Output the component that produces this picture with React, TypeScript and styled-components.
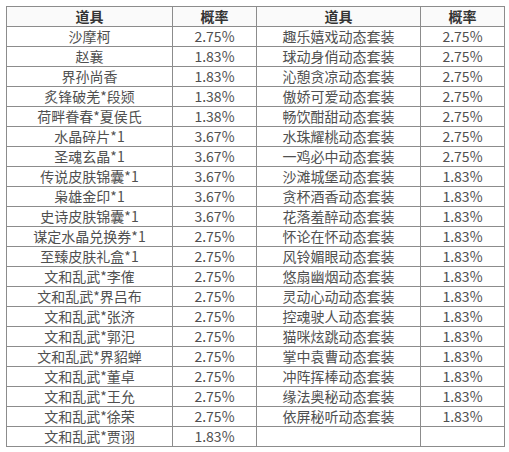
import styled, { createGlobalStyle } from "styled-components";

const GlobalStyle = createGlobalStyle`
    body {
        margin: 0;
        background: #ffffff;
        font-family: "Noto Sans CJK SC", "Noto Sans", sans-serif;
    }
`;

const Page = styled.div`
    padding: 6px 0 0 6px;
`;

const Table = styled.table`
    border-collapse: collapse;
    table-layout: fixed;
    width: 498px;
    font-size: 14px;
`;

const HeadCell = styled.th`
    height: 19px;
    padding: 0;
    border: 1px solid #8c8c8c;
    background: #fafafa;
    color: #333333;
    font-weight: bold;
    line-height: 19px;
    text-align: center;
`;

const Cell = styled.td`
    height: 19px;
    padding: 0;
    border: 1px solid #8c8c8c;
    color: #505050;
    line-height: 19px;
    text-align: center;
    white-space: nowrap;
`;

const left: [string, string][] = [
    ["沙摩柯", "2.75%"],
    ["赵襄", "1.83%"],
    ["界孙尚香", "1.83%"],
    ["炙锋破羌*段颎", "1.38%"],
    ["荷畔眷春*夏侯氏", "1.38%"],
    ["水晶碎片*1", "3.67%"],
    ["圣魂玄晶*1", "3.67%"],
    ["传说皮肤锦囊*1", "3.67%"],
    ["枭雄金印*1", "3.67%"],
    ["史诗皮肤锦囊*1", "3.67%"],
    ["谋定水晶兑换券*1", "2.75%"],
    ["至臻皮肤礼盒*1", "2.75%"],
    ["文和乱武*李傕", "2.75%"],
    ["文和乱武*界吕布", "2.75%"],
    ["文和乱武*张济", "2.75%"],
    ["文和乱武*郭汜", "2.75%"],
    ["文和乱武*界貂蝉", "2.75%"],
    ["文和乱武*董卓", "2.75%"],
    ["文和乱武*王允", "2.75%"],
    ["文和乱武*徐荣", "2.75%"],
    ["文和乱武*贾诩", "1.83%"],
];

const right: [string, string][] = [
    ["趣乐嬉戏动态套装", "2.75%"],
    ["球动身俏动态套装", "2.75%"],
    ["沁憩贪凉动态套装", "2.75%"],
    ["傲娇可爱动态套装", "2.75%"],
    ["畅饮酣甜动态套装", "2.75%"],
    ["水珠耀桃动态套装", "2.75%"],
    ["一鸡必中动态套装", "2.75%"],
    ["沙滩城堡动态套装", "1.83%"],
    ["贪杯酒香动态套装", "1.83%"],
    ["花落羞醉动态套装", "1.83%"],
    ["怀论在怀动态套装", "1.83%"],
    ["风铃媚眼动态套装", "1.83%"],
    ["悠扇幽烟动态套装", "1.83%"],
    ["灵动心动动态套装", "1.83%"],
    ["控魂驶人动态套装", "1.83%"],
    ["猫咪炫跳动态套装", "1.83%"],
    ["掌中袁曹动态套装", "1.83%"],
    ["冲阵挥棒动态套装", "1.83%"],
    ["缘法奥秘动态套装", "1.83%"],
    ["依屏秘听动态套装", "1.83%"],
    ["", ""],
];

export default function App() {
    return (
        <Page>
            <GlobalStyle />
            <Table>
                <colgroup>
                    <col style={{ width: 166 }} />
                    <col style={{ width: 84 }} />
                    <col style={{ width: 164 }} />
                    <col style={{ width: 84 }} />
                </colgroup>
                <thead>
                    <tr>
                        <HeadCell>道具</HeadCell>
                        <HeadCell>概率</HeadCell>
                        <HeadCell>道具</HeadCell>
                        <HeadCell>概率</HeadCell>
                    </tr>
                </thead>
                <tbody>
                    {left.map(([name, rate], i) => (
                        <tr key={i}>
                            <Cell>{name}</Cell>
                            <Cell>{rate}</Cell>
                            <Cell>{right[i][0]}</Cell>
                            <Cell>{right[i][1]}</Cell>
                        </tr>
                    ))}
                </tbody>
            </Table>
        </Page>
    );
}
